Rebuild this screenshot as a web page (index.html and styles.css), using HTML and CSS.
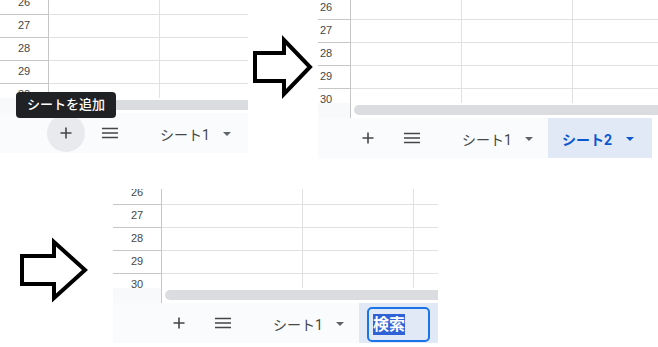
FILE: index.html
```html
<!DOCTYPE html>
<html lang="ja">
<head>
  <meta charset="UTF-8" />
  <title>シートを追加</title>
  <link rel="stylesheet" href="styles.css">
</head>
<body>
  <div class="canvas">

    <!-- 1: hover on add sheet -->
    <div class="sheet sheet-1">
      <div class="sheet-inner">
        <div class="grid cols-narrow">
          <div class="row"><div class="rh">26</div><div class="cell"></div><div class="cell"></div><div class="cell"></div></div>
          <div class="row"><div class="rh">27</div><div class="cell"></div><div class="cell"></div><div class="cell"></div></div>
          <div class="row"><div class="rh">28</div><div class="cell"></div><div class="cell"></div><div class="cell"></div></div>
          <div class="row"><div class="rh">29</div><div class="cell"></div><div class="cell"></div><div class="cell"></div></div>
          <div class="row"><div class="rh">30</div><div class="cell"></div><div class="cell"></div><div class="cell"></div></div>
        </div>
        <div class="hscroll"><div class="hs-corner"></div><div class="hs-track"><div class="hs-thumb"></div></div></div>
        <div class="tabbar">
          <div class="icon-btn hover">
            <svg width="12" height="12" viewBox="0 0 12 12"><path d="M6 0.5v11M0.5 6h11" stroke="#444746" stroke-width="1.6"/></svg>
          </div>
          <div class="icon-btn">
            <svg width="16" height="12" viewBox="0 0 16 12"><path d="M0 1.5h16M0 6h16M0 10.5h16" stroke="#444746" stroke-width="1.7"/></svg>
          </div>
          <div class="tab">
            <span>シート1</span>
            <svg class="caret" width="8" height="4" viewBox="0 0 8 4"><path d="M0 0h8L4 4z" fill="#5f6368"/></svg>
          </div>
        </div>
      </div>
      <div class="tooltip">シートを追加</div>
    </div>

    <svg class="arrow arrow-1" width="70" height="72" viewBox="248 32 70 72">
      <path d="M255 53H284V40L310 67L284 94V81H255Z" />
    </svg>

    <!-- 2: new sheet added -->
    <div class="sheet sheet-2">
      <div class="sheet-inner">
        <div class="grid cols-narrow">
          <div class="row"><div class="rh">26</div><div class="cell"></div><div class="cell"></div><div class="cell"></div></div>
          <div class="row"><div class="rh">27</div><div class="cell"></div><div class="cell"></div><div class="cell"></div></div>
          <div class="row"><div class="rh">28</div><div class="cell"></div><div class="cell"></div><div class="cell"></div></div>
          <div class="row"><div class="rh">29</div><div class="cell"></div><div class="cell"></div><div class="cell"></div></div>
          <div class="row"><div class="rh">30</div><div class="cell"></div><div class="cell"></div><div class="cell"></div></div>
        </div>
        <div class="hscroll"><div class="hs-corner"></div><div class="hs-track"><div class="hs-thumb"></div></div></div>
        <div class="tabbar">
          <div class="icon-btn">
            <svg width="12" height="12" viewBox="0 0 12 12"><path d="M6 0.5v11M0.5 6h11" stroke="#444746" stroke-width="1.6"/></svg>
          </div>
          <div class="icon-btn">
            <svg width="16" height="12" viewBox="0 0 16 12"><path d="M0 1.5h16M0 6h16M0 10.5h16" stroke="#444746" stroke-width="1.7"/></svg>
          </div>
          <div class="tab">
            <span>シート1</span>
            <svg class="caret" width="8" height="4" viewBox="0 0 8 4"><path d="M0 0h8L4 4z" fill="#5f6368"/></svg>
          </div>
          <div class="tab active">
            <span>シート2</span>
            <svg class="caret" width="8" height="4" viewBox="0 0 8 4"><path d="M0 0h8L4 4z" fill="#0b57d0"/></svg>
          </div>
        </div>
      </div>
    </div>

    <svg class="arrow arrow-2" width="80" height="72" viewBox="15 235 80 72">
      <path d="M22 256H54V242L85 270L54 298V284H22Z" />
    </svg>

    <!-- 3: renaming the new sheet -->
    <div class="sheet sheet-3">
      <div class="sheet-inner">
        <div class="grid cols-wide">
          <div class="row"><div class="rh">26</div><div class="cell"></div><div class="cell"></div><div class="cell"></div></div>
          <div class="row"><div class="rh">27</div><div class="cell"></div><div class="cell"></div><div class="cell"></div></div>
          <div class="row"><div class="rh">28</div><div class="cell"></div><div class="cell"></div><div class="cell"></div></div>
          <div class="row"><div class="rh">29</div><div class="cell"></div><div class="cell"></div><div class="cell"></div></div>
          <div class="row"><div class="rh">30</div><div class="cell"></div><div class="cell"></div><div class="cell"></div></div>
        </div>
        <div class="hscroll"><div class="hs-corner"></div><div class="hs-track"><div class="hs-thumb"></div></div></div>
        <div class="tabbar">
          <div class="icon-btn">
            <svg width="12" height="12" viewBox="0 0 12 12"><path d="M6 0.5v11M0.5 6h11" stroke="#444746" stroke-width="1.6"/></svg>
          </div>
          <div class="icon-btn">
            <svg width="16" height="12" viewBox="0 0 16 12"><path d="M0 1.5h16M0 6h16M0 10.5h16" stroke="#444746" stroke-width="1.7"/></svg>
          </div>
          <div class="tab">
            <span>シート1</span>
            <svg class="caret" width="8" height="4" viewBox="0 0 8 4"><path d="M0 0h8L4 4z" fill="#5f6368"/></svg>
          </div>
          <div class="tab-edit">
            <div class="rename"><span class="sel">検索</span></div>
          </div>
        </div>
      </div>
    </div>

  </div>
</body>
</html>
```

FILE: styles.css
```css
body {
  margin: 0;
  background: #fff;
  font-family: "Roboto", "Noto Sans CJK JP", sans-serif;
}
.canvas {
  position: relative;
  width: 658px;
  height: 347px;
  overflow: hidden;
}

/* screenshot pieces */
.sheet {
  position: absolute;
  overflow: hidden;
  background: #fff;
}
.sheet-1 {
  left: 0;
  top: 0;
  width: 248px;
  height: 153px;
}
.sheet-1 .sheet-inner {
  margin-top: -8px;
}
.sheet-2 {
  left: 318px;
  top: 0;
  width: 340px;
  height: 158px;
}
.sheet-2 .sheet-inner {
  margin-top: -3px;
  margin-left: -16px;
}
.sheet-3 {
  left: 113px;
  top: 189px;
  width: 325px;
  height: 154px;
}
.sheet-3 .sheet-inner {
  margin-top: -7px;
}
.sheet-inner {
  width: 400px;
}

/* grid */
.grid {
  height: 106px;
  overflow: hidden;
}
.row {
  display: grid;
  height: 23px;
}
.cols-narrow .row {
  grid-template-columns: 49px 111px 111px 111px;
}
.cols-wide .row {
  grid-template-columns: 49px 141px 111px 111px;
}
.rh, .cell {
  box-sizing: border-box;
  border-right: 1px solid #e1e1e1;
  border-bottom: 1px solid #e1e1e1;
}
.rh {
  border-right-color: #c4c7c5;
  border-bottom-color: #c4c7c5;
  font-family: "Liberation Sans", Arial, sans-serif;
  font-size: 11px;
  line-height: 20px;
  color: #444746;
  text-align: center;
}

/* horizontal scrollbar */
.hscroll {
  display: flex;
  height: 15px;
}
.hs-corner {
  box-sizing: border-box;
  width: 49px;
  background: #f8f9fa;
  border-right: 1px solid #c4c7c5;
}
.hs-track {
  flex: 1;
  padding: 2px 0 0 3px;
}
.hs-thumb {
  height: 10px;
  background: #dadce0;
  border-radius: 5px;
}

/* sheet tabs */
.tabbar {
  display: flex;
  align-items: center;
  width: 350px;
  height: 40px;
  box-sizing: border-box;
  padding-left: 47px;
  background: #f9fbfd;
}
.icon-btn {
  width: 38px;
  height: 38px;
  margin-right: 6px;
  border-radius: 50%;
  display: flex;
  align-items: center;
  justify-content: center;
}
.icon-btn.hover {
  background: #e8eaed;
}
.icon-btn + .icon-btn {
  margin-right: 17px;
}
.tab {
  box-sizing: border-box;
  width: 100px;
  height: 40px;
  padding: 2px 0 0 14px;
  display: flex;
  align-items: center;
  font-size: 14px;
  color: #444746;
  white-space: nowrap;
}
.caret {
  margin-left: 13px;
}
.tab.active {
  width: 104px;
  background: #e1e9f7;
  color: #0b57d0;
  font-weight: 700;
}
.tab.active .caret {
  margin-left: 14px;
}
.tab-edit {
  box-sizing: border-box;
  width: 104px;
  height: 40px;
  padding: 0 0 1px 8px;
  display: flex;
  align-items: flex-end;
  background: #e1e9f7;
}
.rename {
  box-sizing: border-box;
  width: 63px;
  height: 35px;
  padding-left: 4px;
  display: flex;
  align-items: center;
  border: 2px solid #1a73e8;
  border-radius: 5px;
}
.rename .sel {
  background: #2f62d6;
  color: #fff;
  font-size: 16px;
  font-weight: 700;
  line-height: 21px;
}

/* tooltip over the add button */
.tooltip {
  position: absolute;
  left: 16px;
  top: 92px;
  height: 26px;
  padding: 0 11px;
  line-height: 26px;
  border-radius: 4px;
  background: #202124;
  color: #fff;
  font-size: 13px;
  font-weight: 500;
  white-space: nowrap;
}

/* arrows between the steps */
.arrow {
  position: absolute;
}
.arrow path {
  fill: #fff;
  stroke: #000;
  stroke-width: 4;
}
.arrow-1 {
  left: 248px;
  top: 32px;
}
.arrow-2 {
  left: 15px;
  top: 235px;
}
```
